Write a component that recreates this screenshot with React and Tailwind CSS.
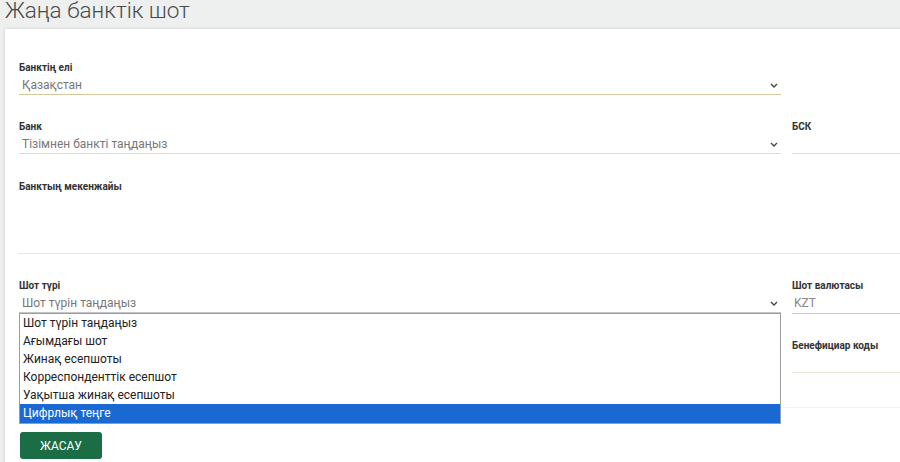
import React from 'react'

const ACCOUNT_TYPES = [
  'Шот түрін таңдаңыз',
  'Ағымдағы шот',
  'Жинақ есепшоты',
  'Корреспонденттік есепшот',
  'Уақытша жинақ есепшоты',
  'Цифрлық теңге',
]

function Chevron() {
  return (
    <svg width="8" height="5" viewBox="0 0 8 5" className="shrink-0">
      <polyline points="1,1 4,4 7,1" fill="none" stroke="#444" strokeWidth="1.4" />
    </svg>
  )
}

function Label({ children }) {
  return <div className="h-4 text-[10px] leading-4 font-bold text-[#333]">{children}</div>
}

function Select({ value, line = 'border-[#d6c89c]', children }) {
  return (
    <div className={`relative h-[19px] border-b ${line} flex items-center justify-between pl-[3px] pr-[3px]`}>
      <span className="text-[12px] leading-[18px] text-[#777]">{value}</span>
      <Chevron />
      {children}
    </div>
  )
}

export default function App() {
  return (
    <div className="w-[900px] h-[462px] overflow-hidden bg-[#edf0ee] font-['Roboto',sans-serif]">
      <h1 className="h-[21px] pl-[5px] text-[22.5px] leading-[21px] font-light text-[#4a4a4a] whitespace-nowrap">
        Жаңа банктік шот
      </h1>

      <div className="mt-[8px] ml-[5px] w-[920px] h-[500px] bg-white shadow-[0_0_3px_rgba(0,0,0,0.15)] pl-[14px] pt-[31px]">
        <div className="grid grid-cols-[762px_1fr] gap-x-[11px]">
          {/* Bank country */}
          <div>
            <Label>Банктің елі</Label>
            <Select value="Қазақстан" />
          </div>
          <div />

          {/* Bank + BIC */}
          <div className="mt-6">
            <Label>Банк</Label>
            <Select value="Тізімнен банкті таңдаңыз" line="border-[#e3dcc2]" />
          </div>
          <div className="mt-6">
            <Label>БСК</Label>
            <div className="h-[19px] border-b border-[#e6e1cc]" />
          </div>

          {/* Address */}
          <div className="col-span-2 mt-[25px]">
            <Label>Банктың мекенжайы</Label>
            <div className="h-[59px] border-b border-[#e8e5d3]" />
          </div>

          {/* Account type, list open */}
          <div className="mt-[24px] relative z-10">
            <Label>Шот түрі</Label>
            <Select value="Шот түрін таңдаңыз" line="border-[#c4c4c4]">
              <ul className="absolute left-0 top-[19px] w-[762px] bg-white border border-[#9c9c9c]">
                {ACCOUNT_TYPES.map((item, i) => {
                  const selected = i === ACCOUNT_TYPES.length - 1
                  return (
                    <li
                      key={item}
                      className={`pl-[3px] text-[12px] ${
                        selected ? 'h-[19px] leading-[19px] bg-[#1a69d3] text-white' : 'h-[18px] leading-[18px] text-[#222]'
                      }`}
                    >
                      {item}
                    </li>
                  )
                })}
              </ul>
            </Select>
          </div>
          <div className="mt-[24px]">
            <Label>Шот валютасы</Label>
            <div className="h-[20px] border-b border-[#d6c89c] pl-[2px] text-[12px] leading-[18px] text-[#888]">KZT</div>
            <div className="mt-6">
              <Label>Бенефициар коды</Label>
              <div className="h-[19px] border-b border-[#ebe7d6]" />
            </div>
          </div>
        </div>

        {/* Footer */}
        <div className="mt-[34px] border-t border-[#f2f2f2] pt-6 pl-px">
          <button className="w-[82px] h-[27px] rounded-[3px] bg-[#1b6d45] text-white text-[12px] font-normal">
            ЖАСАУ
          </button>
        </div>
      </div>
    </div>
  )
}
